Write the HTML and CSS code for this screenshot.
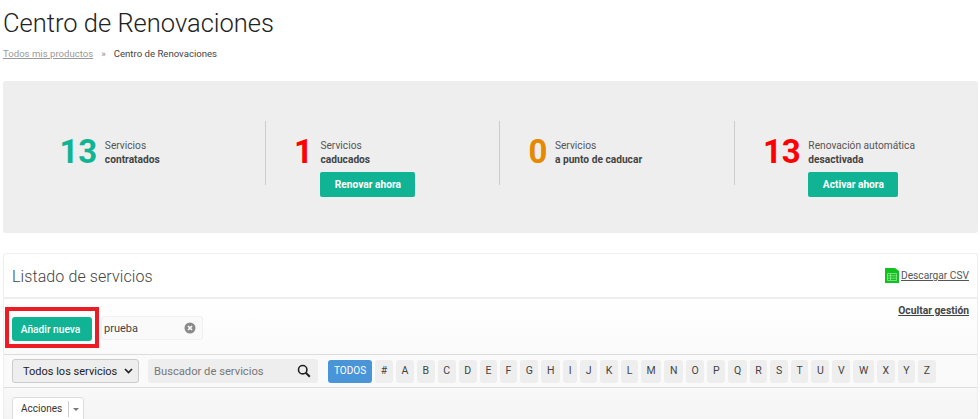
FILE: index.html
```html
<!DOCTYPE html>
<html lang="es">
<head>
<meta charset="utf-8">
<title>Centro de Renovaciones</title>
<link rel="stylesheet" href="styles.css">
</head>
<body>
<h1 class="title">Centro de Renovaciones</h1>
<nav class="crumbs"><a href="#">Todos mis productos</a><span class="sep">»</span><span>Centro de Renovaciones</span></nav>

<section class="stats">
  <div class="stat">
    <div class="num green">13</div>
    <div class="info"><div>Servicios</div><strong>contratados</strong></div>
  </div>
  <div class="stat">
    <div class="num red">1</div>
    <div class="info"><div>Servicios</div><strong>caducados</strong><a class="cta w95" href="#">Renovar ahora</a></div>
  </div>
  <div class="stat">
    <div class="num orange">0</div>
    <div class="info"><div>Servicios</div><strong>a punto de caducar</strong></div>
  </div>
  <div class="stat">
    <div class="num red">13</div>
    <div class="info"><div>Renovación automática</div><strong>desactivada</strong><a class="cta w90" href="#">Activar ahora</a></div>
  </div>
</section>

<section class="panel">
  <header class="panel-head">
    <h2>Listado de servicios</h2>
    <a class="csv" href="#">
      <svg width="14" height="15" viewBox="0 0 14 15" aria-hidden="true"><path d="M0 0h10l4 3v12H0z" fill="#0fc21f"/><path d="M2.5 5.5h9v7h-9zM2.5 7.8h9M2.5 10.2h9M5.5 5.5v7" fill="none" stroke="#8fe68f" stroke-width=".8"/></svg>
      <span>Descargar CSV</span>
    </a>
  </header>
  <div class="manage">
    <div class="tags">
      <button class="add">Añadir nueva</button>
      <span class="tag">prueba<svg class="x" width="12" height="12" viewBox="0 0 12 12" aria-hidden="true"><circle cx="6" cy="6" r="5.5" fill="#8a8a8a"/><path d="M4 4l4 4M8 4l-4 4" stroke="#fff" stroke-width="1.6"/></svg></span>
    </div>
    <a class="hide" href="#">Ocultar gestión</a>
    <span class="highlight"></span>
  </div>
  <div class="filters">
    <div class="select">Todos los servicios<svg width="9" height="6" viewBox="0 0 9 6" aria-hidden="true"><path d="M1 1l3.5 3.5L8 1" fill="none" stroke="#222" stroke-width="1.7"/></svg></div>
    <div class="search"><span>Buscador de servicios</span><svg width="14" height="14" viewBox="0 0 14 14" aria-hidden="true"><circle cx="5.7" cy="5.7" r="4.2" fill="none" stroke="#222" stroke-width="1.6"/><path d="M8.8 8.8l4 4" stroke="#222" stroke-width="2"/></svg></div>
    <div class="letters">
      <a class="all" href="#">TODOS</a><a href="#">#</a><a href="#">A</a><a href="#">B</a><a href="#">C</a><a href="#">D</a><a href="#">E</a><a href="#">F</a><a href="#">G</a><a href="#">H</a><a href="#">I</a><a href="#">J</a><a href="#">K</a><a href="#">L</a><a href="#">M</a><a href="#">N</a><a href="#">O</a><a href="#">P</a><a href="#">Q</a><a href="#">R</a><a href="#">S</a><a href="#">T</a><a href="#">U</a><a href="#">V</a><a href="#">W</a><a href="#">X</a><a href="#">Y</a><a href="#">Z</a>
    </div>
  </div>
  <div class="actions">
    <div class="drop"><span class="lbl">Acciones</span><span class="caret"></span></div>
  </div>
</section>
</body>
</html>
```
FILE: styles.css
```css
* { box-sizing: border-box; }
html, body { height: 419px; overflow: hidden; }
body {
  margin: 0;
  padding: 0 2px 0 3px;
  background: #fff;
  font-family: Roboto, "Liberation Sans", sans-serif;
  color: #444;
}
.title {
  margin: 0;
  padding-top: 7px;
  height: 44px;
  font-size: 25.5px;
  line-height: 32px;
  font-weight: 300;
  color: #222;
}
.crumbs {
  height: 37px;
  padding-top: 3px;
  font-size: 9.6px;
  line-height: 14px;
  color: #444;
}
.crumbs a { color: #999; }
.sep { margin: 0 8px; color: #888; }

.stats {
  height: 152px;
  background: #eee;
  border-radius: 3px;
  padding: 40px 8px 0 27.4px;
  display: grid;
  grid-template-columns: repeat(4, 234.5px);
}
.stat {
  height: 64px;
  padding-left: 28px;
  display: flex;
  align-items: flex-start;
  gap: 7.6px;
  border-left: 1px solid #ccc;
}
.stat:first-child { border-left: 1px solid transparent; }
.num {
  font-size: 33px;
  font-weight: 700;
  line-height: 40px;
  margin-top: 11px;
}
.green { color: #10b494; }
.red { color: #fe0000; }
.orange { color: #e58a00; }
.info {
  padding-top: 18px;
  font-size: 10.2px;
  line-height: 14px;
  color: #555;
}
.info strong { display: block; font-weight: 700; color: #444; }
.cta {
  display: block;
  margin-top: 5px;
  height: 25px;
  line-height: 25px;
  border-radius: 2px;
  background: #10b494;
  color: #fff;
  font-size: 10.2px;
  font-weight: 700;
  text-align: center;
  text-decoration: none;
}
.w95 { width: 95px; }
.w90 { width: 90px; }

.panel {
  margin-top: 20px;
  height: 170px;
  border: 1px solid #eee;
  border-bottom: 0;
  border-radius: 3px 3px 0 0;
}
.panel-head {
  height: 45px;
  display: flex;
  align-items: center;
  justify-content: space-between;
  padding: 0 8px;
  border-bottom: 2px solid #eee;
}
.panel-head h2 {
  margin: 1px 0 0;
  font-size: 16px;
  font-weight: 300;
  letter-spacing: .1px;
  color: #444;
}
.csv {
  display: flex;
  align-items: center;
  gap: 2px;
  font-size: 10.2px;
  color: #555;
}
.manage {
  position: relative;
  height: 56px;
  display: flex;
  justify-content: space-between;
  padding: 5px 8px 0;
  background: linear-gradient(#fff, #fafafa);
  border-bottom: 1px solid #ddd;
}
.tags { display: flex; align-items: flex-start; gap: 9px; margin-top: 12px; }
.highlight {
  position: absolute;
  left: 1px;
  top: 8px;
  width: 94px;
  height: 41px;
  border: 4px solid #ed1c24;
}
.add {
  display: block;
  width: 80px;
  height: 24px;
  margin-top: 1px;
  border: 0;
  border-radius: 3px;
  background: #10b494;
  color: #fff;
  font-family: inherit;
  font-size: 10.2px;
  font-weight: 500;
  padding: 0 3px 0 0;
}
.tag {
  width: 102px;
  height: 24px;
  padding: 0 6px 0 2px;
  display: flex;
  align-items: center;
  justify-content: space-between;
  background: #fafafa;
  border: 1px solid #f0f0f0;
  border-radius: 3px;
  font-size: 11px;
  color: #444;
}
.hide {
  font-size: 10.3px;
  font-weight: 700;
  color: #444;
  line-height: 14px;
}
.filters {
  height: 33px;
  display: flex;
  align-items: center;
  padding-left: 8px;
  background: #fafafa;
  border-bottom: 1px solid #ddd;
}
.select {
  width: 127px;
  height: 24px;
  display: flex;
  align-items: center;
  justify-content: space-between;
  padding: 0 5px 0 10px;
  background: #eee;
  border: 1px solid #ccc;
  border-radius: 3px;
  font-size: 11px;
  color: #222;
}
.search {
  width: 170px;
  height: 24px;
  margin-left: 9px;
  padding: 0 7px 0 6px;
  display: flex;
  align-items: center;
  justify-content: space-between;
  background: #eee;
  border-radius: 3px;
  font-size: 11.2px;
  color: #777;
}
.letters { display: flex; gap: 3px; margin-left: 10px; }
.letters a {
  height: 23px;
  padding: 0 5.62px;
  line-height: 22px;
  text-align: center;
  background: #eee;
  border-radius: 3px;
  font-size: 10.5px;
  color: #444;
  text-decoration: none;
}
.letters a.all {
  padding: 0 6px;
  font-size: 10px;
  background: #4a94d8;
  color: #fff;
}
.actions {
  height: 37px;
  padding: 9px 8px 0;
  background: linear-gradient(#f8f8f8, #f4f4f4);
}
.drop {
  width: 72px;
  height: 26px;
  padding-bottom: 2px;
  display: flex;
  align-items: center;
  background: #fff;
  border: 1px solid #ddd;
  border-radius: 3px;
}
.lbl {
  width: 56px;
  padding-left: 8px;
  font-size: 10px;
  color: #333;
  line-height: 16px;
  border-right: 1px solid #ccc;
}
.caret {
  margin-left: 4px;
  border-style: solid;
  border-width: 3px 3.5px 0;
  border-color: #777 transparent transparent;
}
```
